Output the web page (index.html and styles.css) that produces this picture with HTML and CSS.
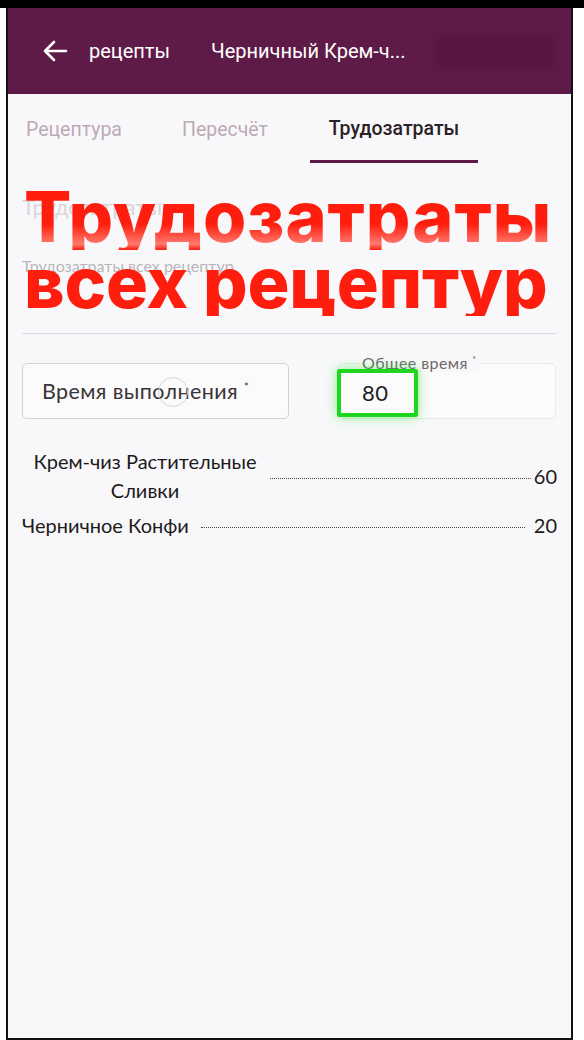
FILE: index.html
```html
<!DOCTYPE html>
<html lang="ru">
<head>
    <meta charset="UTF-8">
    <meta name="viewport" content="width=device-width, initial-scale=1.0">
    <title>Трудозатраты</title>
    <link rel="stylesheet" href="styles.css">
</head>
<body>
    <div class="top-strip"></div>
    <div class="phone">
        <!-- App bar -->
        <header class="app-bar">
            <svg class="back" width="26" height="24" viewBox="0 0 26 24">
                <path d="M24 12H3M12 3l-9 9 9 9" fill="none" stroke="#fff" stroke-width="2.6" stroke-linecap="round" stroke-linejoin="round"/>
            </svg>
            <span class="crumb">рецепты</span>
            <span class="title">Черничный Крем-ч...</span>
            <div class="save-btn"></div>
        </header>

        <!-- Tabs -->
        <nav class="tabs">
            <div class="tab">Рецептура</div>
            <div class="tab">Пересчёт</div>
            <div class="tab active">Трудозатраты</div>
        </nav>

        <main class="content">
            <div class="intro">
                <div class="ghost-title">Трудозатраты</div>
                <div class="ghost-sub">Трудозатраты всех рецептур</div>
                <div class="overlay">
                    <div class="line">Трудозатраты</div>
                    <div class="line second">всех рецептур</div>
                </div>
            </div>
            <hr class="divider">

            <div class="fields">
                <div class="field">
                    <span>Время выполнения <sup>*</sup></span>
                    <span class="ripple"></span>
                </div>
                <div class="field outlined">
                    <label>Общее время <sup>*</sup></label>
                    <span class="value">80</span>
                    <span class="highlight"></span>
                </div>
            </div>

            <div class="rows">
                <div class="row">
                    <div class="name wrap">Крем-чиз Растительные Сливки</div>
                    <div class="dots"></div>
                    <div class="num">60</div>
                </div>
                <div class="row">
                    <div class="name">Черничное Конфи</div>
                    <div class="dots"></div>
                    <div class="num">20</div>
                </div>
            </div>
        </main>
    </div>
</body>
</html>
```

FILE: styles.css
```css
body {
    margin: 0;
    background: #fff;
    font-family: Lato, "Open Sans", sans-serif;
}
.top-strip {
    height: 8px;
    background: #000;
}
.phone {
    margin-left: 6px;
    width: 563px;
    height: 1030px;
    border-left: 2px solid #111;
    border-right: 2px solid #111;
    border-bottom: 2px solid #111;
    background: #f8f8fa;
    display: flex;
    flex-direction: column;
}
.app-bar {
    height: 86px;
    background: #5f1b47;
    display: flex;
    align-items: center;
    color: #fff;
    font-family: Roboto, sans-serif;
    font-size: 20px;
    padding-left: 34px;
    position: relative;
}
.back {
    margin-right: 21px;
}
.crumb {
    margin-right: 41px;
}
.save-btn {
    position: absolute;
    left: 427px;
    top: 26px;
    width: 120px;
    height: 36px;
    border-radius: 10px;
    background: #561641;
    filter: blur(4px);
}
.tabs {
    display: flex;
    height: 69px;
    font-family: Roboto, sans-serif;
    font-size: 19.5px;
}
.tab {
    color: #bcaab4;
    display: flex;
    align-items: center;
    padding-top: 2px;
    margin-left: 18px;
    width: 140px;
}
.tab:nth-child(2) {
    margin-left: 16px;
    width: 128px;
}
.tab.active {
    color: #2b2127;
    font-weight: 500;
    margin-left: 0;
    width: 168px;
    justify-content: center;
    border-bottom: 3px solid #5f1b47;
    box-sizing: border-box;
}
.content {
    padding: 0 14px 0 14px;
}
.intro {
    position: relative;
    height: 170px;
}
.ghost-title {
    color: #d8d6da;
    font-size: 22px;
    padding-top: 30px;
}
.ghost-sub {
    color: #b8b6ba;
    font-size: 16px;
    padding-top: 36px;
}
.overlay {
    position: absolute;
    left: 2px;
    top: 21px;
    white-space: nowrap;
    font-family: Inter, sans-serif;
    font-weight: 800;
    font-size: 70px;
    line-height: 66px;
}
.overlay .line {
    letter-spacing: 1px;
    color: #ff1d0d;
    background: linear-gradient(#ff1d0d 0, #ff1d0d 40px, #ff7a6e 60px, #ff1d0d 66px);
    -webkit-background-clip: text;
    background-clip: text;
    -webkit-text-fill-color: transparent;
}
.overlay .line.second {
    letter-spacing: -0.2px;
    background: #ff1d0d;
    -webkit-background-clip: text;
    background-clip: text;
}
.divider {
    border: none;
    border-top: 1px solid #dcdbe0;
    margin: 0 0 0 0;
}
.fields {
    display: flex;
    justify-content: space-between;
    margin-top: 29px;
}
.field {
    position: relative;
    width: 267px;
    height: 56px;
    box-sizing: border-box;
    border: 1px solid #d3d2d6;
    border-radius: 5px;
    display: flex;
    align-items: center;
    padding-left: 19px;
    font-size: 21.5px;
    letter-spacing: 0.4px;
    color: #3a3338;
    background: #fbfbfc;
}
sup {
    font-size: 11px;
    vertical-align: 8px;
}
.ripple {
    position: absolute;
    left: 135px;
    top: 13px;
    width: 28px;
    height: 28px;
    border-radius: 50%;
    border: 1px solid #d6d6d8;
}
.field.outlined {
    width: 218px;
    border-color: #e8e7ea;
    padding-left: 23px;
    margin-right: 1px;
}
.field.outlined label {
    position: absolute;
    left: 20px;
    top: -11px;
    padding: 0 3px;
    background: #f8f8fa;
    font-size: 16px;
    color: #6e686c;
}
.field.outlined label sup {
    font-size: 9px;
    vertical-align: 6px;
}
.value {
    font-size: 22px;
    color: #1f1b1e;
    padding-top: 2px;
}
.highlight {
    position: absolute;
    left: -2px;
    top: 5px;
    width: 81px;
    height: 48px;
    box-sizing: border-box;
    border: 4px solid #1fd61f;
    border-radius: 2px;
    box-shadow: 0 0 12px rgba(40, 230, 40, 0.55);
}
.rows {
    margin-top: 28px;
    font-size: 20px;
    color: #1d1a1c;
}
.row {
    display: flex;
    align-items: center;
    margin-bottom: 8px;
}
.name.wrap {
    width: 246px;
    text-align: center;
    line-height: 29px;
}
.name {
    margin-right: 12px;
}
.dots {
    flex: 1;
    border-top: 1px dotted #444;
    margin-top: 5px;
}
.num {
    width: 32px;
    text-align: right;
}
.row:first-child .name {
    margin-right: 2px;
}
.row:first-child .num {
    width: 26px;
}
```
